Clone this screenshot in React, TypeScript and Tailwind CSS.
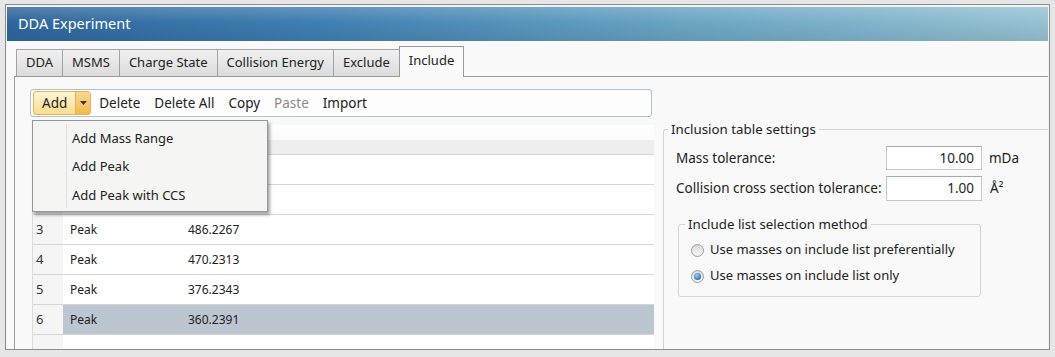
import React from "react";

const tabs = ["DDA", "MSMS", "Charge State", "Collision Energy", "Exclude"];

const rows = [
  { n: 1, type: "", mass: "" },
  { n: 2, type: "", mass: "" },
  { n: 3, type: "Peak", mass: "486.2267" },
  { n: 4, type: "Peak", mass: "470.2313" },
  { n: 5, type: "Peak", mass: "376.2343" },
  { n: 6, type: "Peak", mass: "360.2391", selected: true },
];

function Radio({ checked }: { checked?: boolean }) {
  return (
    <span className="flex h-[13px] w-[13px] items-center justify-center rounded-full border border-[#9c9c9c] bg-[linear-gradient(180deg,#d9d9d9,#f7f7f7)]">
      {checked && (
        <span className="h-[7px] w-[7px] rounded-full bg-[radial-gradient(circle_at_40%_35%,#9fd0f2,#2f74b8_70%)]" />
      )}
    </span>
  );
}

function ToolbarButton({ label, disabled }: { label: string; disabled?: boolean }) {
  return (
    <span className={`px-[7px] ${disabled ? "text-[#8a8a8a]" : "text-[#222]"}`}>{label}</span>
  );
}

export default function App() {
  return (
    <div className="h-[357px] w-[1055px] overflow-hidden bg-[#e6e6e6] pl-[5px] pt-[4px] font-['Noto_Sans',sans-serif] text-[13px] text-[#222]">
      <div className="flex h-[346px] w-[1045px] flex-col border border-[#8c8c8c] bg-[#f3f3f3] px-[1px] pt-[2px]">
        {/* title bar */}
        <div className="flex h-[34px] shrink-0 items-center bg-[linear-gradient(180deg,rgba(255,255,255,0.18),rgba(255,255,255,0)_45%,rgba(0,0,0,0.08)),linear-gradient(90deg,#2f669d_0%,#3f7fb2_30%,#6aa5c3_65%,#96c2d2_100%)] pl-[11px] text-[14.5px] text-white">
          DDA Experiment
        </div>

        {/* body */}
        <div className="flex flex-1 flex-col bg-[#f9f9f9] pl-[7px] pt-[5px]">
          {/* tab strip */}
          <div className="flex h-[31px] shrink-0 items-end border-b border-[#9a9a9a] pl-[2px]">
            {tabs.map((t) => (
              <div
                key={t}
                className="-mr-px flex h-[27px] items-center border border-b-0 border-[#a3a3a3] bg-[linear-gradient(180deg,#f0f0f0,#dcdcdc)] px-[9px] text-[#222]"
              >
                {t}
              </div>
            ))}
            <div className="-mb-px flex h-[31px] items-center border border-b-0 border-[#9a9a9a] bg-[#fafafa] px-[9px] pb-[3px]">
              Include
            </div>
          </div>

          {/* panel */}
          <div className="flex flex-1 border-l border-[#9a9a9a] bg-[#f9f9f9]">
            {/* left: toolbar + table */}
            <div className="relative flex w-[640px] shrink-0 flex-col">
              <div className="ml-[15px] mt-[12px] flex h-[28px] w-[622px] items-center rounded-[3px] border border-[#b4c0cc] bg-[#fdfdfd] pl-[2px] text-[13.5px]">
                <div className="flex h-[24px] items-stretch rounded-[3px] border border-[#e0b561] bg-[linear-gradient(180deg,#fff4d6,#fbdc8e)]">
                  <span className="flex items-center px-[8px]">Add</span>
                  <span className="flex w-[15px] items-center justify-center border-l border-[#e0b561] bg-[linear-gradient(180deg,#fbd98b,#f3b94f)]">
                    <svg width="7" height="4" viewBox="0 0 7 4">
                      <path d="M0 0h7L3.5 4z" fill="#3a3a3a" />
                    </svg>
                  </span>
                </div>
                <div className="ml-[1px] flex">
                  <ToolbarButton label="Delete" />
                  <ToolbarButton label="Delete All" />
                  <ToolbarButton label="Copy" />
                  <ToolbarButton label="Paste" disabled />
                  <ToolbarButton label="Import" />
                </div>
              </div>

              {/* table */}
              <div className="ml-[17px] mt-[8px] flex w-[622px] flex-1 flex-col border-l border-[#dcdcdc] bg-white text-[12px]">
                <div className="flex h-[30px] shrink-0 border-b border-[#d5d5d5] bg-[linear-gradient(180deg,#ffffff_0%,#fbfbfb_50%,#eeeeee_52%,#eeeeee_100%)]">
                  <div className="w-[30px] border-r border-[#dadada]" />
                  <div className="w-[125px] border-r border-[#dadada]" />
                  <div className="flex-1" />
                </div>
                {rows.map((r) => (
                  <div key={r.n} className="flex h-[30px] shrink-0">
                    <div className="flex w-[30px] items-center border-b border-[#d5d5d5] bg-[#f5f5f5] pl-[3px] text-[13px] text-[#333]">
                      {r.n}
                    </div>
                    <div
                      className={`flex flex-1 items-center border-b border-[#d5d5d5] ${r.selected ? "bg-[#bcc6d0]" : ""}`}
                    >
                      <span className="w-[125px] pl-[7px]">{r.type}</span>
                      <span>{r.mass}</span>
                    </div>
                  </div>
                ))}
                <div className="flex flex-1">
                  <div className="w-[30px] bg-[#f5f5f5]" />
                </div>
              </div>

              {/* add dropdown menu */}
              <div className="absolute left-[17px] top-[43px] h-[92px] w-[236px] border border-[#979797] bg-[#f5f5f4] pt-[3px] text-[13px] shadow-[2px_3px_3px_rgba(0,0,0,0.35)]">
                <div className="absolute bottom-[3px] left-[33px] top-[3px] w-px bg-[#e0e0e0]" />
                {["Add Mass Range", "Add Peak", "Add Peak with CCS"].map((m) => (
                  <div key={m} className="flex h-[28.5px] items-center pl-[39px]">
                    {m}
                  </div>
                ))}
              </div>
            </div>

            {/* right: settings */}
            <div className="flex-1 pl-[8px] pt-[43px]">
              <fieldset className="h-full rounded-tl-[3px] border-l border-t border-[#d3d3d3] p-0 text-[13.5px]">
                <legend className="ml-[4px] px-[3px] text-[13.3px] leading-[18px]">Inclusion table settings</legend>
                <div className="ml-[12px] mt-[8px] flex h-[24px] items-center">
                  <span className="w-[210px]">Mass tolerance:</span>
                  <span className="flex h-[24px] w-[96px] items-center justify-end border border-[#c8c8c8] border-t-[#a9a9a9] bg-white pr-[7px]">
                    10.00
                  </span>
                  <span className="ml-[7px]">mDa</span>
                </div>
                <div className="ml-[12px] mt-[6px] flex h-[25px] items-center">
                  <span className="w-[210px]">Collision cross section tolerance:</span>
                  <span className="flex h-[25px] w-[96px] items-center justify-end border border-[#c8c8c8] border-t-[#a9a9a9] bg-white pr-[7px]">
                    1.00
                  </span>
                  <span className="ml-[8px]">Å²</span>
                </div>
                <fieldset className="ml-[14px] mt-[14px] h-[82px] w-[303px] rounded-[3px] border border-[#d5d5d5] p-0 text-[13px]">
                  <legend className="ml-[6px] px-[3px] text-[13.3px] leading-[18px]">Include list selection method</legend>
                  <div className="ml-[12px] mt-[7px] flex h-[20px] items-center gap-[6px]">
                    <Radio />
                    <span>Use masses on include list preferentially</span>
                  </div>
                  <div className="ml-[12px] mt-[6px] flex h-[20px] items-center gap-[6px]">
                    <Radio checked />
                    <span>Use masses on include list only</span>
                  </div>
                </fieldset>
              </fieldset>
            </div>
          </div>
        </div>
      </div>
    </div>
  );
}
